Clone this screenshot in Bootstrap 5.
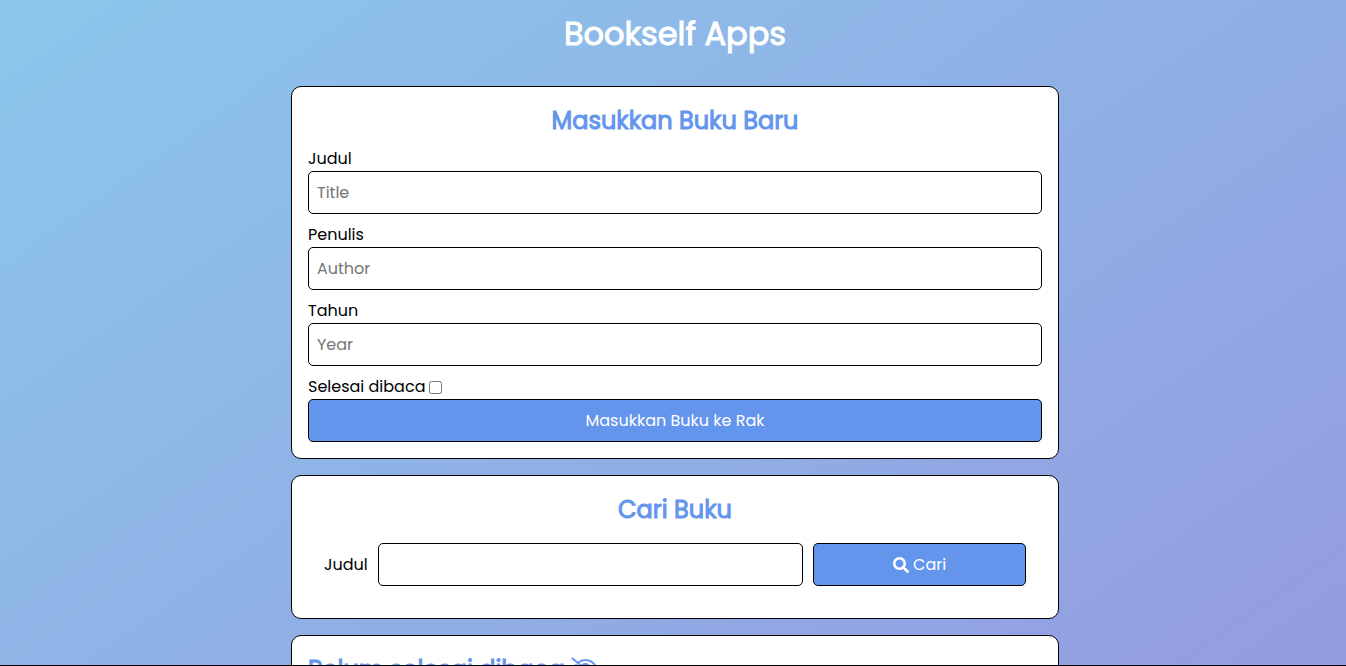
<!DOCTYPE html>
<html lang="id">
<head>
<meta charset="utf-8">
<meta name="viewport" content="width=device-width, initial-scale=1">
<title>Bookself Apps</title>
<link href="https://cdn.jsdelivr.net/npm/bootstrap@5.3.0/dist/css/bootstrap.min.css" rel="stylesheet">
<style>
  body { font-family: Poppins, Inter, "Open Sans", sans-serif; font-size: 16px; line-height: 24px; color: #000; }
  .app-shell { background: linear-gradient(145deg, #8bc7eb, #949be1); border-bottom: 1px solid #000; }
  .app-title { font-size: 32px; line-height: 48px; font-weight: 400; -webkit-text-stroke: 1px currentColor; padding: 10px 0 28px; }
  .shelf { max-width: 772px; }
  .panel { background: #fff; border: 1px solid #000; border-radius: 10px; }
  .panel h2 { font-size: 24px; line-height: 36px; font-weight: 400; -webkit-text-stroke: 1px currentColor; color: cornflowerblue; }
  .shelf-heading { gap: 6px; }
  .field { margin-bottom: 9px; }
  .form-control, .btn-rak { height: 43px; border: 1px solid #000; border-radius: 5px; padding: 8px; font-size: 16px; }
  .form-control::placeholder { color: #757575; }
  .btn-rak, .btn-rak:hover { background: cornflowerblue; color: #fff; border-color: #000; }
  .search-form { display: grid; grid-template-columns: auto 2fr 1fr; gap: 10px; padding: 15px 16px 16px; }
  .tick { width: 13px; height: 13px; }
</style>
</head>
<body>
<div class="app-shell vh-100 overflow-hidden">
  <header><h1 class="app-title text-white text-center m-0 ps-1">Bookself Apps</h1></header>
  <main class="shelf mx-auto ps-1 d-flex flex-column gap-3">
    <section class="panel p-3">
      <h2 class="text-center mb-2">Masukkan Buku Baru</h2>
      <form>
        <div class="field">
          <label class="d-block" for="title">Judul</label>
          <input class="form-control" id="title" type="text" placeholder="Title">
        </div>
        <div class="field">
          <label class="d-block" for="author">Penulis</label>
          <input class="form-control" id="author" type="text" placeholder="Author">
        </div>
        <div class="field">
          <label class="d-block" for="year">Tahun</label>
          <input class="form-control" id="year" type="number" placeholder="Year">
        </div>
        <div class="d-flex align-items-center gap-1">
          <label for="done">Selesai dibaca</label>
          <input class="tick" id="done" type="checkbox">
        </div>
        <button class="btn btn-rak w-100" type="submit">Masukkan Buku ke Rak</button>
      </form>
    </section>
    <section class="panel p-3">
      <h2 class="text-center mb-0">Cari Buku</h2>
      <form class="search-form align-items-center">
        <label for="query">Judul</label>
        <input class="form-control" id="query" type="text">
        <button class="btn btn-rak d-flex align-items-center justify-content-center gap-1" type="submit">
          <svg width="16" height="16" viewBox="0 0 512 512" fill="currentColor" aria-hidden="true"><path d="M505 442.700 405.300 343c-4.500-4.500-10.600-7-17-7H372c27.600-35.300 44-79.700 44-128C416 93.100 322.900 0 208 0S0 93.100 0 208s93.100 208 208 208c48.300 0 92.700-16.400 128-44v16.300c0 6.400 2.500 12.500 7 17l99.700 99.700c9.400 9.400 24.600 9.400 33.900 0l28.300-28.300c9.400-9.400 9.400-24.600.100-34zM208 336c-70.700 0-128-57.200-128-128 0-70.700 57.200-128 128-128 70.700 0 128 57.200 128 128 0 70.700-57.200 128-128 128z"/></svg>
          Cari
        </button>
      </form>
    </section>
    <section class="panel p-3">
      <h2 class="shelf-heading d-flex align-items-center">Belum selesai dibaca
        <svg width="28" height="26" viewBox="0 0 28 26" fill="none" stroke="currentColor" stroke-width="2" stroke-linecap="round" aria-hidden="true"><path d="M1.500 1.500 26.500 22.500M8 5C10 3.600 12 3 14.500 3c5.500 0 9.500 3.800 12 9-.9 1.900-2 3.500-3.500 5M5 8c-1.300 1.200-2.400 2.700-3.200 4.200 2.500 5.200 6.700 8.800 12.200 8.800 1.700 0 3.400-.400 5-1.100M11.500 7.800c.8-.5 1.800-.8 2.900-.8 2.800 0 5.100 2.300 5.100 5.100 0 .8-.200 1.500-.500 2.200M9 12c0 2.900 2.200 5.100 5 5.100"/></svg>
      </h2>
    </section>
  </main>
</div>
<script src="https://cdn.jsdelivr.net/npm/bootstrap@5.3.0/dist/js/bootstrap.bundle.min.js"></script>
</body>
</html>
